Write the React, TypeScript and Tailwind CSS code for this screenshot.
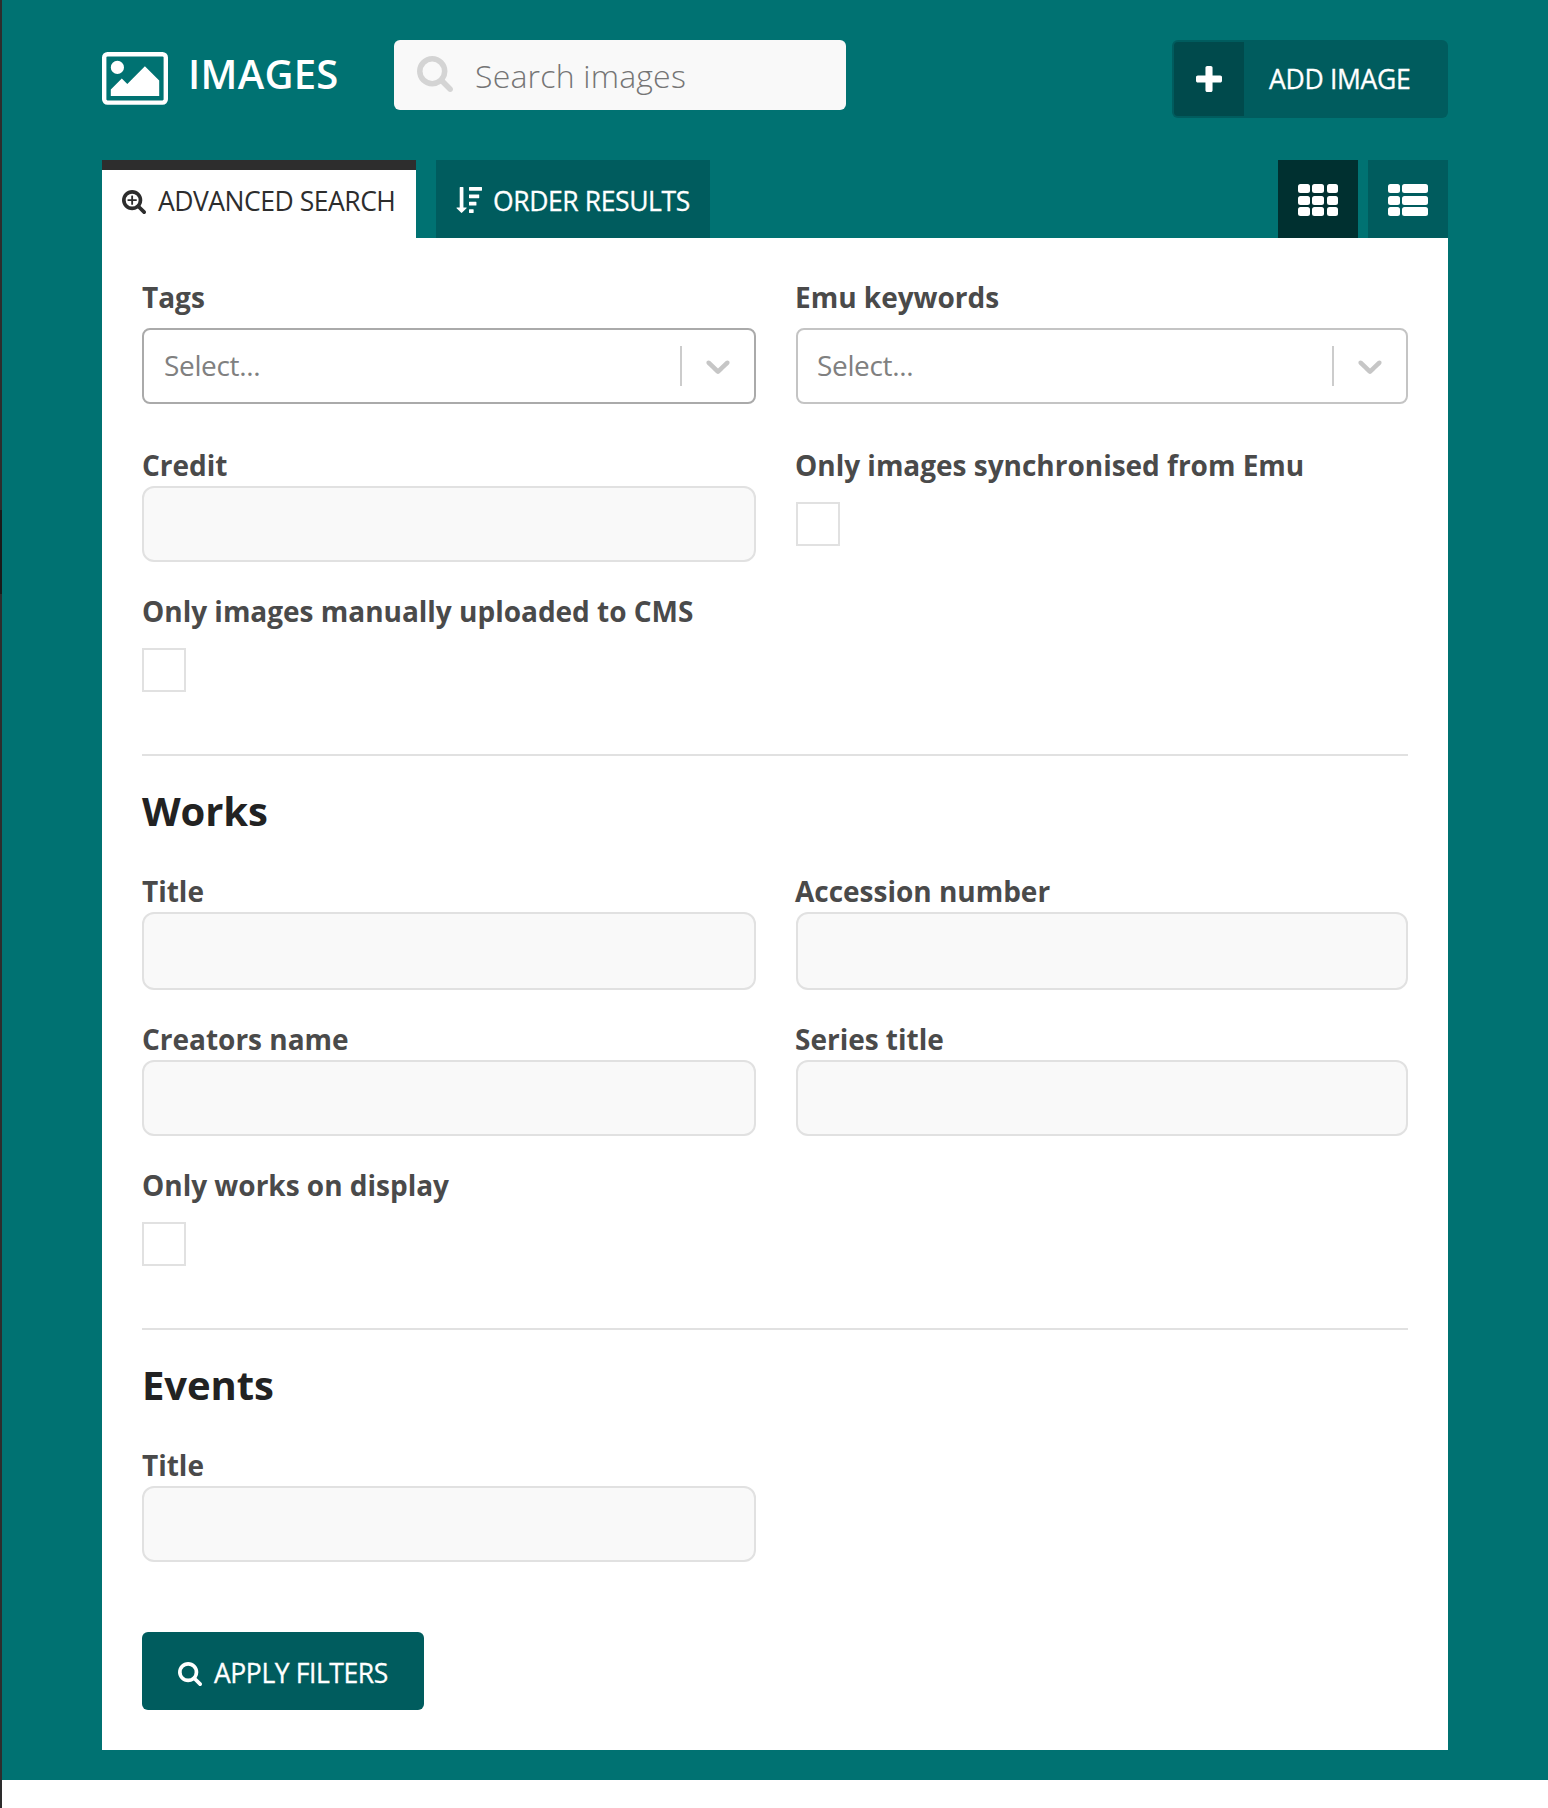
import React from "react";

type IconProps = { d: string; box: string; className: string };

function Icon({ d, box, className }: IconProps) {
  return (
    <svg viewBox={box} className={className} fill="currentColor" aria-hidden="true">
      <g transform="translate(0 1536) scale(1 -1)">
        <path d={d} />
      </g>
    </svg>
  );
}

const SEARCH =
  "M1152 832q0 185 -131.500 316.500t-316.500 131.500t-316.500 -131.500t-131.500 -316.500t131.500 -316.500t316.500 -131.500t316.500 131.500t131.500 316.500zM1664 0q0 -52 -38 -90t-90 -38q-54 0 -90 38l-343 342q-179 -124 -399 -124q-143 0 -273.500 55.500t-225 150t-150 225t-55.500 273.500t55.500 273.500t150 225t225 150t273.500 55.500t273.500 -55.500t225 -150t150 -225t55.500 -273.500q0 -220 -124 -399l343 -343q37 -37 37 -90z";
const SEARCH_PLUS =
  "M1024 864v-64q0 -13 -9.500 -22.500t-22.500 -9.500h-224v-224q0 -13 -9.500 -22.500t-22.500 -9.500h-64q-13 0 -22.500 9.500t-9.500 22.500v224h-224q-13 0 -22.500 9.500t-9.500 22.500v64q0 13 9.500 22.500t22.500 9.500h224v224q0 13 9.500 22.500t22.500 9.500h64q13 0 22.500 -9.500t9.500 -22.500v-224h224q13 0 22.500 -9.500t9.500 -22.500z" +
  SEARCH;
const PICTURE =
  "M640 960q0 -80 -56 -136t-136 -56t-136 56t-56 136t56 136t136 56t136 -56t56 -136zM1664 576v-448h-1408v192l320 320l160 -160l512 512zM1760 1280h-1600q-13 0 -22.500 -9.500t-9.500 -22.500v-1216q0 -13 9.500 -22.500t22.500 -9.500h1600q13 0 22.500 9.500t9.500 22.500v1216q0 13 -9.500 22.500t-22.500 9.500zM1920 1248v-1216q0 -66 -47 -113t-113 -47h-1600q-66 0 -113 47t-47 113v1216q0 66 47 113t113 47h1600q66 0 113 -47t47 -113z";
const PLUS =
  "M1408 800v-192q0 -40 -28 -68t-68 -28h-416v-416q0 -40 -28 -68t-68 -28h-192q-40 0 -68 28t-28 68v416h-416q-40 0 -68 28t-28 68v192q0 40 28 68t68 28h416v416q0 40 28 68t68 28h192q40 0 68 -28t28 -68v-416h416q40 0 68 -28t28 -68z";
const SORT =
  "M736 96q0 -12 -10 -24l-319 -319q-10 -9 -23 -9q-12 0 -23 9l-320 320q-15 16 -7 35q8 20 30 20h192v1376q0 14 9 23t23 9h192q14 0 23 -9t9 -23v-1376h192q14 0 23 -9t9 -23zM1216 -32v-192q0 -14 -9 -23t-23 -9h-256q-14 0 -23 9t-9 23v192q0 14 9 23t23 9h256q14 0 23 -9t9 -23zM1408 480v-192q0 -14 -9 -23t-23 -9h-448q-14 0 -23 9t-9 23v192q0 14 9 23t23 9h448q14 0 23 -9t9 -23zM1600 992v-192q0 -14 -9 -23t-23 -9h-640q-14 0 -23 9t-9 23v192q0 14 9 23t23 9h640q14 0 23 -9t9 -23zM1792 1504v-192q0 -14 -9 -23t-23 -9h-832q-14 0 -23 9t-9 23v192q0 14 9 23t23 9h832q14 0 23 -9t9 -23z";

function Chevron() {
  return (
    <svg viewBox="0 0 20 20" className="size-10" fill="currentColor" aria-hidden="true">
      <path d="M4.516 7.548c0.436-0.446 1.043-0.481 1.576 0l3.908 3.747 3.908-3.747c0.533-0.481 1.141-0.446 1.574 0 0.436 0.445 0.408 1.197 0 1.615-0.406 0.418-4.695 4.502-4.695 4.502-0.217 0.223-0.502 0.335-0.787 0.335s-0.570-0.112-0.789-0.335c0 0-4.287-4.084-4.695-4.502s-0.436-1.170 0-1.615z" />
    </svg>
  );
}

function Label({ children }: { children: string }) {
  return (
    <div className="pb-0.5 text-[28px] font-bold leading-[38px] tracking-[-0.015px] text-[#4a4a4a] group-even:-ml-px">
      {children}
    </div>
  );
}

function SelectField({ label, strong }: { label: string; strong?: boolean }) {
  return (
    <div className="group h-[168px]">
      <Label>{label}</Label>
      <div
        className={
          "mt-[10px] flex h-[76px] items-center rounded-lg border-2 bg-white " +
          (strong ? "border-[#aaaaaa]" : "border-[#c4c4c4]")
        }
      >
        <span className="flex-1 pb-0.5 pl-5 text-[28px] leading-10 tracking-[-0.35px] text-[#808080] group-even:pl-[19px]">
          Select...
        </span>
        <span className="h-10 w-0.5 bg-[#cccccc]" />
        <span className="px-4 text-[#c6c6c6]">
          <Chevron />
        </span>
      </div>
    </div>
  );
}

function TextField({ label, tall }: { label: string; tall?: boolean }) {
  return (
    <div className={"group " + (tall ? "h-[148px]" : "h-[146px]")}>
      <Label>{label}</Label>
      <div
        className={
          "rounded-xl border-2 border-[#e1e1e1] bg-[#f9f9f9] " + (tall ? "h-[78px]" : "h-[76px]")
        }
      />
    </div>
  );
}

function CheckField({ label }: { label: string }) {
  return (
    <div className="group h-[146px]">
      <Label>{label}</Label>
      <div className="mt-4 size-[44px] border-2 border-[#e1e1e1] bg-white" />
    </div>
  );
}

function SectionTitle({ children }: { children: string }) {
  return (
    <h2 className="mt-[31px] mb-[37px] text-[40px] font-bold leading-[48px] tracking-[-0.1px] text-[#222222]">
      {children}
    </h2>
  );
}

const CELL = "h-[9px] rounded-[2.5px] bg-white";

export default function App() {
  return (
    <div className="flex h-[1808px] w-[1548px] bg-white font-['Open_Sans','Noto_Sans',sans-serif]">
      <div className="w-0.5 bg-[#2d2d2d] pt-[510px]">
        <div className="h-[84px] bg-[#1a1a1a]" />
      </div>
      <div className="h-[1780px] flex-1 bg-[#007272] px-[100px] pt-10">
        <header className="flex h-[120px] items-start">
          <Icon d={PICTURE} box="0 128 1920 1536" className="mt-3 h-[52.800px] w-[66px] text-white" />
          <h1 className="ml-[20px] mt-[6px] w-[206px] text-[40px] font-semibold leading-[56px] tracking-[0.3px] text-white">
            IMAGES
          </h1>
          <div className="flex h-[70px] w-[452px] items-center rounded-md bg-[#f9f9f9] pl-[23px]">
            <Icon d={SEARCH} box="0 0 1664 1664" className="mb-0.5 size-[36px] text-[#d4d4d4]" />
            <span className="ml-[22px] mt-0.5 text-[32px] font-light leading-10 tracking-[0.2px] text-[#757575]">
              Search images
            </span>
          </div>
          <button className="ml-auto flex h-[78px] w-[276px] items-stretch rounded-md bg-[#005c5e] p-0.5 text-white">
            <span className="flex w-[70px] items-center justify-center rounded-l bg-[#004a4c]">
              <Icon d={PLUS} box="0 128 1408 1408" className="size-[26px]" />
            </span>
            <span className="ml-[25px] self-center text-[26.500px] leading-10 tracking-[-0.3px] [-webkit-text-stroke:0.3px]">
              ADD IMAGE
            </span>
          </button>
        </header>
        <nav className="flex h-[78px]">
          <div className="flex w-[314px] items-center whitespace-nowrap border-t-[10px] border-[#2d2d2d] bg-white pb-2 pl-5 text-[#2d2d2d]">
            <Icon d={SEARCH_PLUS} box="0 0 1664 1664" className="mt-[3px] size-6" />
            <span className="ml-3 pt-px text-[26.500px] leading-10 tracking-[-0.48px]">ADVANCED SEARCH</span>
          </div>
          <div className="ml-5 flex w-[274px] items-center whitespace-nowrap bg-[#005c5e] pl-5 pt-0.5 text-white">
            <Icon d={SORT} box="0 0 1792 1792" className="size-[26px]" />
            <span className="ml-[11px] pt-px text-[26.500px] leading-10 tracking-[-0.4px] [-webkit-text-stroke:0.3px]">
              ORDER RESULTS
            </span>
          </div>
          <div className="ml-auto grid w-20 grid-cols-[11.500px_11.500px_11.500px] content-center justify-center gap-x-[2.750px] gap-y-[2.500px] bg-[#003030] pt-0.5">
            {Array.from({ length: 9 }, (_, i) => (
              <span key={i} className={CELL} />
            ))}
          </div>
          <div className="ml-2.5 grid w-20 grid-cols-[11.500px_26px] content-center justify-center gap-x-[2.500px] gap-y-[2.500px] bg-[#005c5e] pt-0.5">
            {Array.from({ length: 6 }, (_, i) => (
              <span key={i} className={CELL} />
            ))}
          </div>
        </nav>
        <main className="h-[1512px] bg-white px-10 pt-10">
          <section className="grid h-[478px] grid-cols-[614px_612px] content-start gap-x-10 border-b-2 border-[#e1e1e1]">
            <SelectField label="Tags" strong />
            <SelectField label="Emu keywords" />
            <TextField label="Credit" />
            <CheckField label="Only images synchronised from Emu" />
            <CheckField label="Only images manually uploaded to CMS" />
          </section>
          <SectionTitle>Works</SectionTitle>
          <section className="grid grid-cols-[614px_612px] gap-x-10">
            <TextField label="Title" tall />
            <TextField label="Accession number" tall />
            <TextField label="Creators name" />
            <TextField label="Series title" />
            <CheckField label="Only works on display" />
          </section>
          <div className="mt-4 h-0.5 bg-[#e1e1e1]" />
          <SectionTitle>Events</SectionTitle>
          <section className="grid grid-cols-[614px_612px] gap-x-10">
            <TextField label="Title" />
          </section>
          <button className="mt-10 flex h-[78px] w-[282px] items-center whitespace-nowrap rounded-md bg-[#005c5e] pl-9 text-white">
            <Icon d={SEARCH} box="0 0 1664 1664" className="mt-[5px] size-6" />
            <span className="ml-3 mt-[3px] text-[26.500px] leading-10 tracking-[-0.42px] [-webkit-text-stroke:0.3px]">
              APPLY FILTERS
            </span>
          </button>
        </main>
      </div>
    </div>
  );
}
